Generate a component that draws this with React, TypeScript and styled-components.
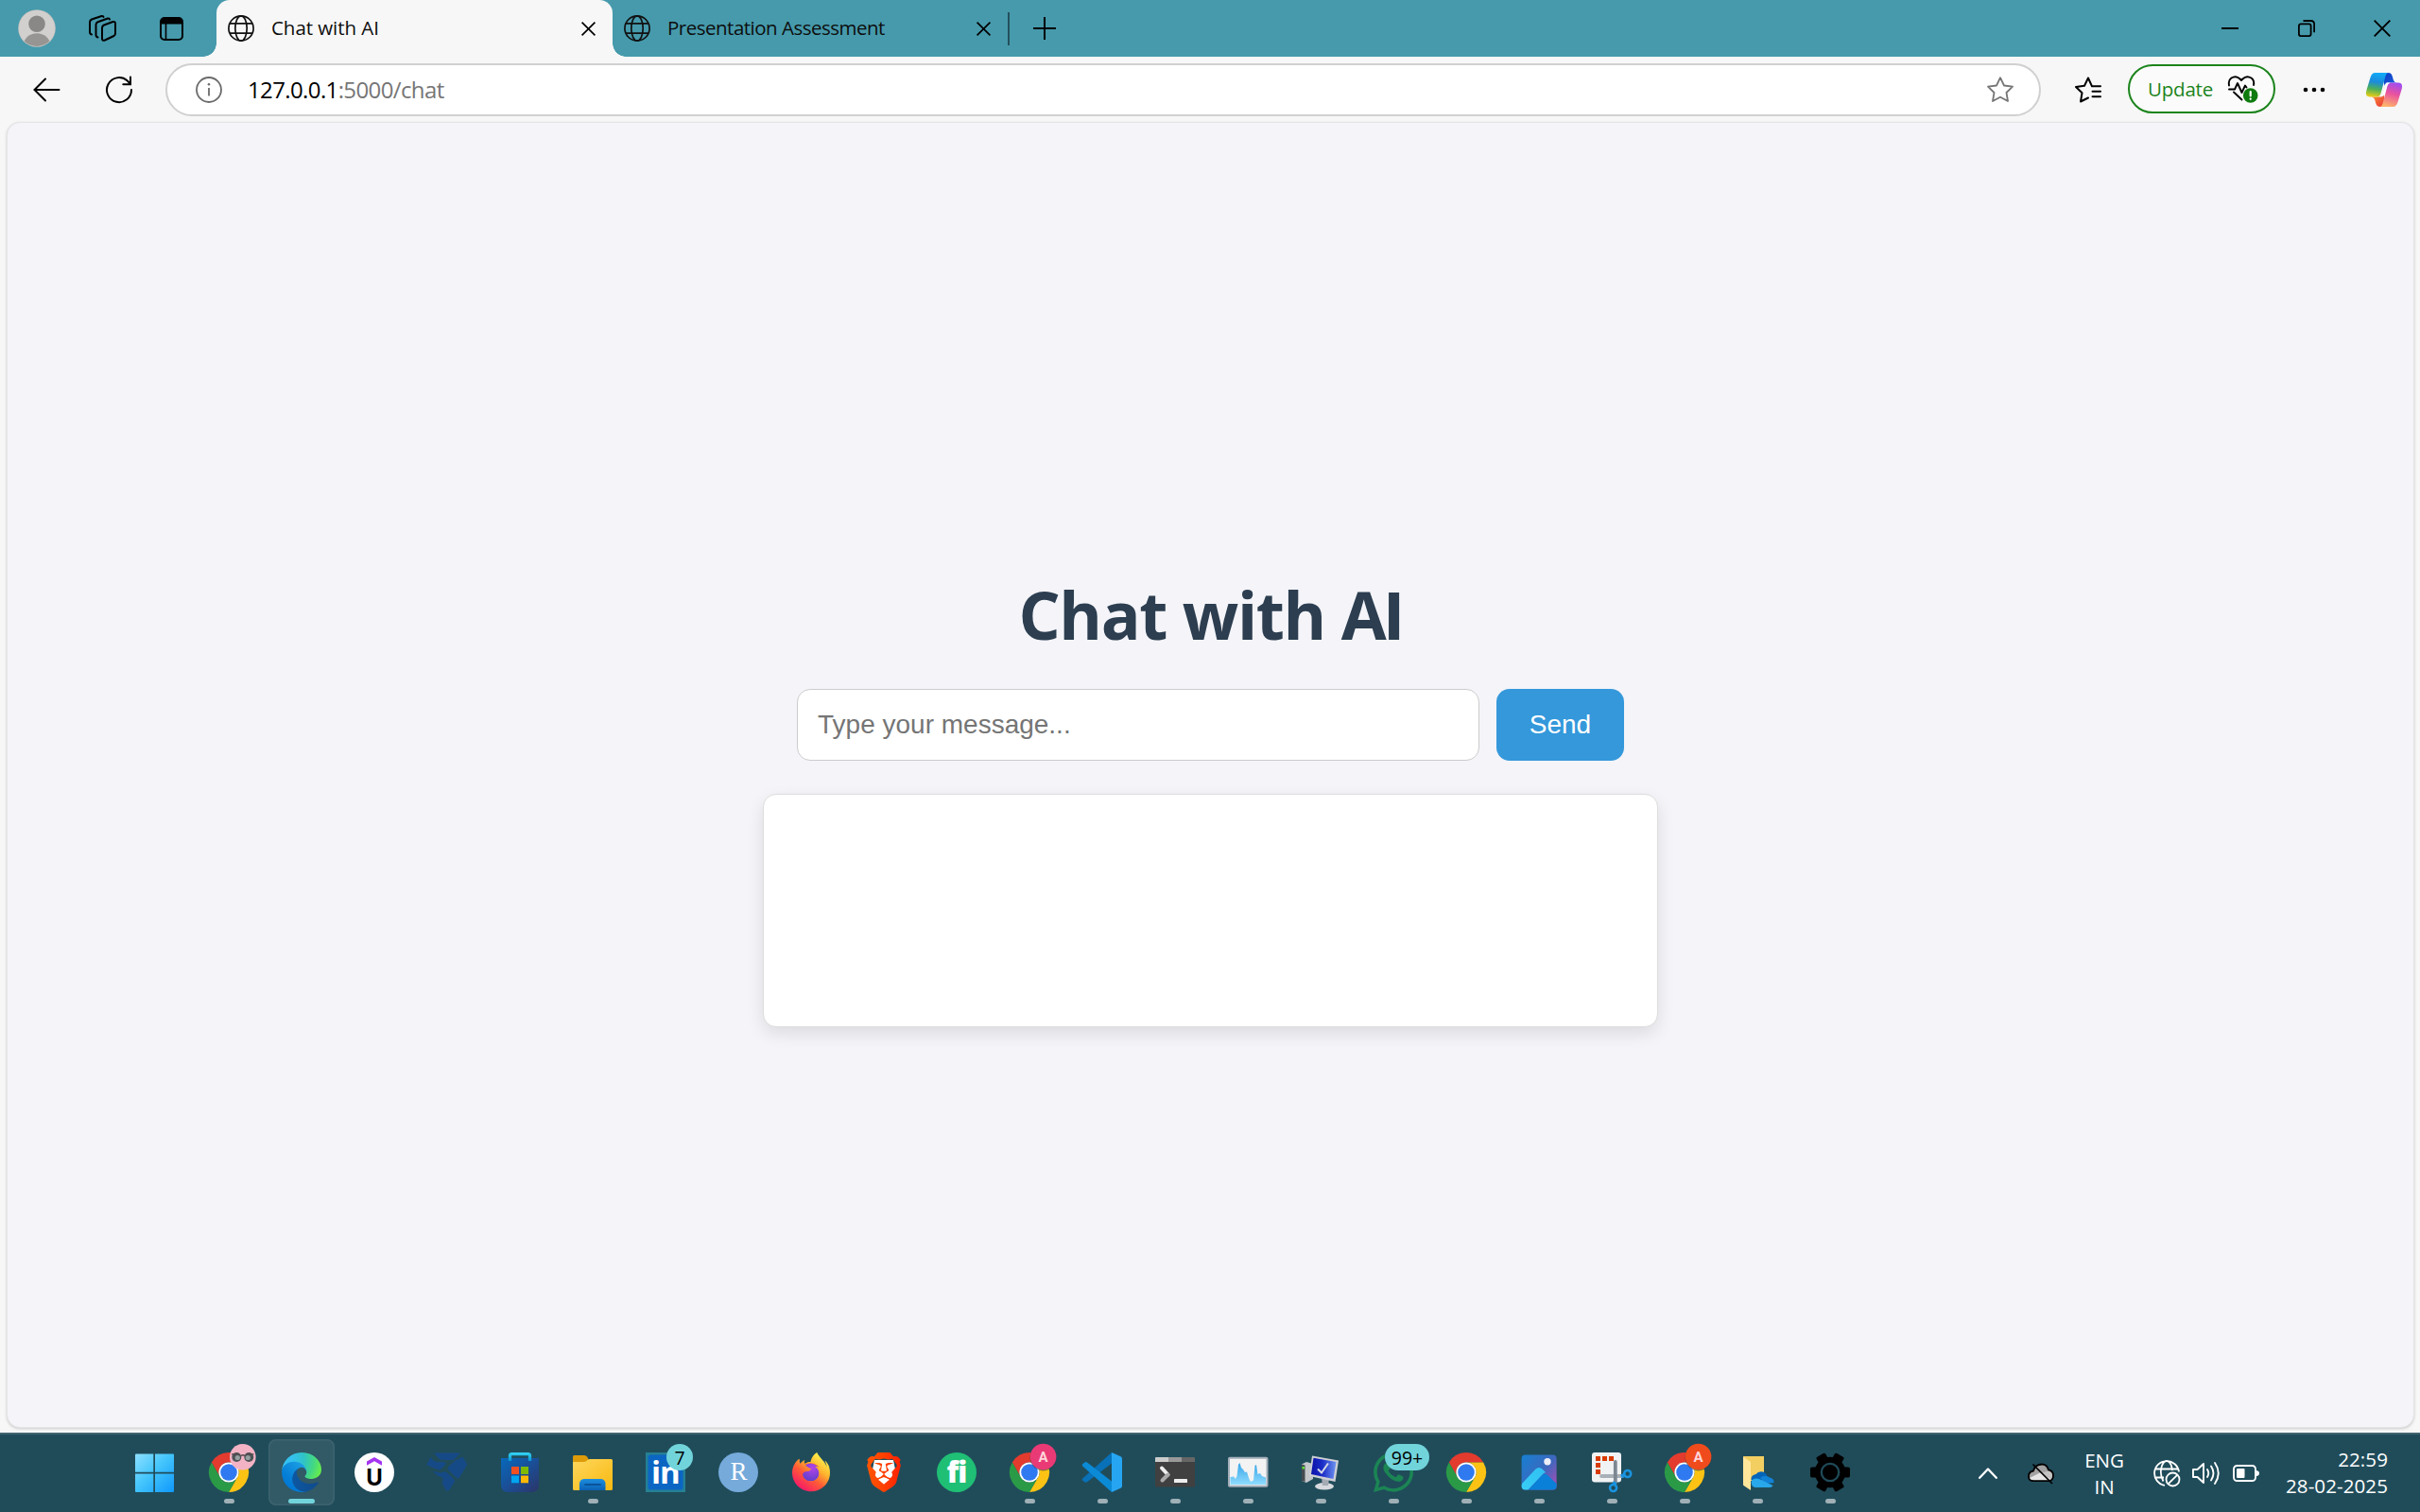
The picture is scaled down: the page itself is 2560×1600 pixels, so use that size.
import React from 'react';
import styled, { createGlobalStyle } from 'styled-components';
import { FaWhatsapp, FaFirefoxBrowser } from 'react-icons/fa';
import { SiBrave } from 'react-icons/si';

const GlobalStyle = createGlobalStyle`
  * { box-sizing: border-box; }
  html, body { margin: 0; padding: 0; }
  body { width: 2560px; height: 1600px; overflow: hidden; background: #f7f7f7; }
`;

const uiFont = `'Open Sans', 'Noto Sans', sans-serif`;

const Desktop = styled.div`
  width: 2560px;
  height: 1600px;
  display: flex;
  flex-direction: column;
  font-family: ${uiFont};
  background: #f7f7f7;
`;

const Icon = styled.svg<{ $w: number; $h?: number; $ml?: number }>`
  display: block;
  flex: none;
  width: ${p => p.$w}px;
  height: ${p => p.$h ?? p.$w}px;
  margin-left: ${p => p.$ml ?? 0}px;
  overflow: visible;
`;

/* ---------- title bar ---------- */

const TitleBar = styled.header`
  height: 60px;
  flex: none;
  display: flex;
  align-items: center;
  background: #469aac;
`;

const Tools = styled.div`
  width: 229px;
  flex: none;
  display: flex;
  align-items: center;
  padding-left: 19px;
`;

const Tab = styled.div<{ $active?: boolean }>`
  position: relative;
  width: ${p => (p.$active ? 419 : 418)}px;
  height: 60px;
  flex: none;
  display: flex;
  align-items: center;
  padding: 0 18px 0 12px;
  border-radius: 14px 14px 0 0;
  background: ${p => (p.$active ? '#f7f7f7' : 'transparent')};
  ${p =>
    p.$active &&
    `&::before, &::after {
      content: '';
      position: absolute;
      bottom: 0;
      width: 14px;
      height: 14px;
    }
    &::before { left: -14px; background: radial-gradient(circle at 0 0, transparent 13.5px, #f7f7f7 14px); }
    &::after { right: -14px; background: radial-gradient(circle at 100% 0, transparent 13.5px, #f7f7f7 14px); }`}
`;

const TabTitle = styled.span<{ $ls: number }>`
  flex: 1;
  margin-left: 18px;
  padding-bottom: 2px;
  font-size: 20.5px;
  line-height: 28px;
  letter-spacing: ${p => p.$ls}px;
  color: #0d0d0d;
  white-space: nowrap;
`;

const TabDivider = styled.div`
  width: 2px;
  height: 35px;
  background: #23505c;
  flex: none;
`;

const WindowControls = styled.div`
  margin-left: auto;
  display: flex;
  align-items: center;
  gap: 62.5px;
  padding-right: 31px;
`;

/* ---------- toolbar ---------- */

const Toolbar = styled.div`
  height: 69px;
  flex: none;
  display: flex;
  align-items: center;
  padding-left: 35px;
`;

const AddressBar = styled.div`
  width: 1984px;
  height: 56px;
  margin: 1px 0 0 35px;
  flex: none;
  display: flex;
  align-items: center;
  padding: 0 27px 0 30px;
  border: 2px solid #d0d0d0;
  border-radius: 28px;
  background: #fff;
`;

const Url = styled.div`
  flex: 1;
  margin-left: 27px;
  font-size: 24px;
  line-height: 32px;
  letter-spacing: -0.62px;
  color: #767676;
  white-space: nowrap;
  b { font-weight: 400; color: #000; }
`;

const UpdateButton = styled.button`
  width: 156px;
  height: 52px;
  margin: 0 0 1px 28px;
  padding: 0 16px 1px 19px;
  display: flex;
  align-items: center;
  justify-content: space-between;
  border: 2px solid #1b841b;
  border-radius: 26px;
  background: #fbfbfb;
  color: #1b841b;
  font-family: ${uiFont};
  font-size: 20.5px;
  letter-spacing: -0.2px;
`;

/* ---------- page ---------- */

const Viewport = styled.div`
  height: 1387px;
  flex: none;
  padding: 0 6px 5px 7px;
`;

const Page = styled.main`
  height: 1382px;
  display: flex;
  flex-direction: column;
  align-items: center;
  padding-top: 473px;
  border: 1px solid #e4e4e6;
  border-radius: 14px;
  box-shadow: 0 1px 3px rgba(0, 0, 0, 0.18);
  background: #f4f4f9;
`;

const Heading = styled.h1`
  height: 94px;
  margin: 0;
  font-size: 69.5px;
  line-height: 94px;
  font-weight: 700;
  letter-spacing: -1.35px;
  color: #2c3e50;
`;

/* sans capital I without slab serifs */
const PlainI = styled.span`
  margin-left: -1px;
  font-family: Roboto, sans-serif;
  font-weight: 800;
  line-height: 1;
`;

const Form = styled.form`
  display: flex;
  gap: 18px;
  margin-top: 32px;
`;

const MessageInput = styled.input`
  width: 722px;
  height: 76px;
  padding: 0 21px;
  border: 1px solid #ccc;
  border-radius: 14px;
  background: #fff;
  font: 28px 'Liberation Sans', Arial, sans-serif;
  &::placeholder { color: #757575; opacity: 1; }
`;

const SendButton = styled.button`
  width: 135px;
  height: 76px;
  padding: 0;
  border: 0;
  border-radius: 14px;
  background: #3498db;
  color: #fff;
  font: 28px 'Liberation Sans', Arial, sans-serif;
`;

const ChatBox = styled.section`
  width: 947px;
  height: 247px;
  margin-top: 35px;
  border: 1px solid #ddd;
  border-radius: 14px;
  background: #fff;
  box-shadow: 0 7px 18px rgba(0, 0, 0, 0.1);
`;

/* ---------- taskbar ---------- */

const Taskbar = styled.footer`
  height: 84px;
  flex: none;
  display: flex;
  align-items: flex-start;
  padding-left: 128px;
  border-top: 2px solid #426470;
  background: #204c5a;
`;

const Item = styled.div<{ $active?: boolean; $ml?: number }>`
  position: relative;
  width: 70px;
  height: 70px;
  flex: none;
  margin: 5px 7px 0 ${p => p.$ml ?? 0}px;
  padding-top: 14px;
  display: flex;
  flex-direction: column;
  align-items: center;
  gap: 7px;
  border-radius: 8px;
  ${p => p.$active && `background: #315966; box-shadow: inset 0 0 0 1.5px #3d636f;`}
`;

const Indicator = styled.i<{ $active?: boolean }>`
  width: ${p => (p.$active ? 28 : 11)}px;
  height: 5px;
  border-radius: 3px;
  background: ${p => (p.$active ? '#72d4db' : '#9fb0b6')};
`;

const Badge = styled.span<{ $w?: number; $left?: number }>`
  position: absolute;
  top: 5px;
  left: ${p => p.$left ?? 36}px;
  width: ${p => p.$w ?? 28}px;
  height: 28px;
  border-radius: 14px;
  background: #72d4db;
  color: #000;
  font-size: 19.5px;
  line-height: 29px;
  text-align: center;
`;

const Tray = styled.div`
  margin-left: auto;
  height: 82px;
  display: flex;
  align-items: center;
  padding: 0 34px 0 0;
  color: #fff;
`;

const TrayText = styled.div<{ $ml: number; $w: number; $align: string; $ls?: number; $up?: number }>`
  margin-left: ${p => p.$ml}px;
  margin-bottom: ${p => p.$up ?? 0}px;
  width: ${p => p.$w}px;
  font-size: 20.5px;
  line-height: 28px;
  letter-spacing: ${p => p.$ls ?? 0}px;
  text-align: ${p => p.$align};
  white-space: nowrap;
`;

/* ---------- drawings ---------- */

const Globe = ({ ml = 0 }: { ml?: number }) => (
  <Icon $w={28} $ml={ml} viewBox="0 0 28 28" fill="none" stroke="#111" strokeWidth="1.7">
    <circle cx="14" cy="14" r="13.1" />
    <ellipse cx="14" cy="14" rx="6.2" ry="13.1" />
    <path d="M2 8.8H26M2 19.2H26" />
  </Icon>
);

const Cross = ({ s = 15, ml = 0, w = 2 }: { s?: number; ml?: number; w?: number }) => (
  <Icon $w={s} $ml={ml} viewBox="0 0 18 18" fill="none" stroke="#000" strokeWidth={w}>
    <path d="M.7.7 17.3 17.3M17.3.7.7 17.3" />
  </Icon>
);

const Chrome = ({ children }: { children?: React.ReactNode }) => {
  const d = 'M2.8 10.5A21 21 0 0 1 39.2 10.5H21A10.5 10.5 0 0 0 11.9 26.25Z';
  return (
    <Icon $w={42} viewBox="0 0 42 42">
      <path d={d} fill="#e33b2e" />
      <path d={d} fill="#fcc314" transform="rotate(120 21 21)" />
      <path d={d} fill="#2b9a47" transform="rotate(240 21 21)" />
      <circle cx="21" cy="21" r="10.6" fill="#fff" />
      <circle cx="21" cy="21" r="8.8" fill="#2f7af0" />
      {children}
    </Icon>
  );
};

const ProfileA = ({ color }: { color: string }) => (
  <g>
    <circle cx="35.6" cy="5.4" r="14" fill="#173f4c" opacity=".55" />
    <circle cx="35.6" cy="4.6" r="13.8" fill={color} />
    <text x="35.6" y="10" fontSize="15" fontWeight="700" textAnchor="middle" fill="#ffd5da" fontFamily="Roboto, sans-serif">A</text>
  </g>
);

const Start = () => (
  <Icon $w={41} $h={42} viewBox="0 -1.5 41 42">
    <defs>
      <linearGradient id="win" gradientUnits="userSpaceOnUse" x1="0" y1="0" x2="41" y2="41">
        <stop offset="0" stopColor="#8de0ff" /><stop offset=".45" stopColor="#45c6fc" /><stop offset="1" stopColor="#0f98fb" />
      </linearGradient>
    </defs>
    <path fill="url(#win)" d="M1 0H19.3V19.3H0V1Q0 0 1 0ZM21 0H40Q41 0 41 1V19.3H21ZM0 21H19.3V40.5H1Q0 40.5 0 39.5ZM21 21H41V39.5Q41 40.5 40 40.5H21Z" />
  </Icon>
);

const Edge = () => (
  <Icon $w={42} viewBox="0 0 256 256">
    <defs>
      <linearGradient id="e1" gradientUnits="userSpaceOnUse" x1="63" y1="178" x2="241" y2="178"><stop offset="0" stopColor="#0c59a4" /><stop offset="1" stopColor="#114a8b" /></linearGradient>
      <linearGradient id="e2" gradientUnits="userSpaceOnUse" x1="157" y1="100" x2="46" y2="221"><stop offset="0" stopColor="#1b9de2" /><stop offset=".2" stopColor="#1595df" /><stop offset=".7" stopColor="#0680d7" /><stop offset="1" stopColor="#0078d4" /></linearGradient>
      <radialGradient id="e3" gradientUnits="userSpaceOnUse" cx="30" cy="50" r="235"><stop offset="0" stopColor="#35c1f1" /><stop offset=".2" stopColor="#34c1ed" /><stop offset=".5" stopColor="#2fc2c8" /><stop offset=".78" stopColor="#43d883" /><stop offset="1" stopColor="#66eb4e" /></radialGradient>
    </defs>
    <g transform="translate(-4.63 -4.92)">
      <path fill="url(#e1)" d="M235.68 195.46a93.73 93.73 0 0 1-10.54 4.71 101.87 101.87 0 0 1-35.9 6.46c-47.32 0-88.54-32.55-88.54-74.32A31.48 31.48 0 0 1 117.13 105c-42.8 1.8-53.8 46.4-53.8 72.53 0 73.88 68.09 81.37 82.76 81.37 7.91 0 19.84-2.3 27-4.56l1.31-.44a128.34 128.34 0 0 0 66.6-52.8 4 4 0 0 0-5.32-5.64Z" />
      <path fill="url(#e2)" d="M110.34 246.34A79.2 79.2 0 0 1 87.6 225a80.72 80.72 0 0 1 29.53-120c3.12-1.47 8.45-4.13 15.54-4a32.35 32.35 0 0 1 25.69 13 31.88 31.88 0 0 1 6.36 18.66c0-.21 24.46-79.6-80-79.6-43.9 0-80 41.66-80 78.21a130.15 130.15 0 0 0 12.11 56 128 128 0 0 0 156.38 67.11 75.55 75.55 0 0 1-62.78-8Z" />
      <path fill="url(#e3)" d="M156.94 153.78c-.81 1.05-3.3 2.5-3.3 5.66 0 2.61 1.7 5.12 4.72 7.23 14.38 10 41.49 8.68 41.56 8.68a59.56 59.56 0 0 0 30.27-8.35 61.38 61.38 0 0 0 30.43-52.88c.26-22.41-8-37.31-11.34-43.91C228.09 28.76 182.35 4.92 132.61 4.92a128 128 0 0 0-128 126.2c.48-36.54 36.8-66.05 80-66.05 3.5 0 23.46.34 42 10.07 16.34 8.58 24.9 18.94 30.85 29.21 6.18 10.67 7.28 24.15 7.28 29.52s-2.74 13.33-7.8 19.91Z" />
    </g>
  </Icon>
);

const Udemy = () => (
  <Icon $w={42} viewBox="0 0 42 42">
    <circle cx="21" cy="21" r="21" fill="#fff" />
    <path d="M21 5 29 9.6V13.8L21 9.2 13 13.8V9.6Z" fill="#a435f0" />
    <text x="21" y="35.3" textAnchor="middle" fontSize="24" fontWeight="700" fontFamily="Inter, sans-serif" fill="#000">U</text>
  </Icon>
);

const BlueGem = () => (
  <Icon $w={42} viewBox="0 0 42 42" fill="#164a87">
    <path d="M7 .5H35L29.5 6.5Q28 8 26 8H15.5Q14 8 12.5 6.5Z" />
    <path d="M4 4.5Q5.500 9 10 10H17Q21 10.500 18.500 13.500L15 17Q13 19 9.500 17.600L0 13.500Q-.5 12 .8 10Z" />
    <path d="M37.5 4.500 42 12.500Q42 13.800 41 15L34 26.500Q32.500 28 30.500 26.500L22.500 18.800Q20.800 17 22.500 15L30 8Q34 7 37.500 4.500Z" />
    <path d="M6.500 19.500Q13 23 17.500 20.500Q19.500 20 21 21.500L27.500 27.500Q29.500 29.500 28.500 31.500L23 40Q21 41.500 19.500 39.500L15.500 32Q19 27 14 25.500Q9 24.500 6.500 19.500Z" />
  </Icon>
);

const Store = () => (
  <Icon $w={42} viewBox="0 0 42 42">
    <defs>
      <linearGradient id="st" x1="0" y1="0" x2="1" y2="1"><stop offset="0" stopColor="#0869bb" /><stop offset=".5" stopColor="#1a4e96" /><stop offset="1" stopColor="#2c3567" /></linearGradient>
      <linearGradient id="sh" gradientUnits="userSpaceOnUse" x1="0" y1="0" x2="0" y2="9"><stop offset="0" stopColor="#35d6f5" /><stop offset="1" stopColor="#0a93cf" /></linearGradient>
    </defs>
    <path d="M1 6H41V34Q41 42 33 42H9Q1 42 1 34Z" fill="url(#st)" />
    <path d="M10.500 9V3.500Q10.500 1.600 12.500 1.600H29.500Q31.500 1.600 31.500 3.500V9" fill="none" stroke="url(#sh)" strokeWidth="3.300" />
    <path d="M12 15H20V23H12Z" fill="#f25022" /><path d="M22 15H30V23H22Z" fill="#7fba00" />
    <path d="M12 24.500H20V32.300H12Z" fill="#00a4ef" /><path d="M22 24.500H30V32.300H22Z" fill="#ffb900" />
  </Icon>
);

const Explorer = () => (
  <Icon $w={42} viewBox="0 0 42 42">
    <defs>
      <linearGradient id="fo" x1="0" y1="0" x2="1" y2="1"><stop offset="0" stopColor="#ffd75e" /><stop offset="1" stopColor="#f8b90f" /></linearGradient>
      <linearGradient id="fb" x1="0" y1="0" x2="0" y2="1"><stop offset="0" stopColor="#1c8ede" /><stop offset="1" stopColor="#0c62b5" /></linearGradient>
    </defs>
    <path d="M0 4.500Q0 3 1.500 3H12Q14 3 15 4.500L17 8V14H0Z" fill="#dd9b0a" />
    <path d="M0 10H12Q14 10 15 8.600Q16 7 18 7H40.500Q42 7 42 8.500V38.500Q42 40 40.500 40H1.500Q0 40 0 38.500Z" fill="url(#fo)" />
    <path d="M7 40V33.500Q7 28 12.500 28H29Q34.500 28 34.500 33.500V40Z" fill="url(#fb)" />
    <path d="M13 34H29" stroke="#0a549c" strokeWidth="1.800" strokeLinecap="round" />
  </Icon>
);

const LinkedIn = () => (
  <Icon $w={42} viewBox="0 0 42 42">
    <rect width="42" height="42" fill="#258094" />
    <rect x="2.500" y="2.500" width="37" height="37" rx="2.500" fill="#0b66c3" />
    <text x="20.800" y="33" textAnchor="middle" fontSize="33" fontWeight="700" letterSpacing="-1" fontFamily="'Open Sans', sans-serif" fill="#fff">in</text>
  </Icon>
);

const RStudio = () => (
  <Icon $w={42} viewBox="0 0 42 42">
    <circle cx="21" cy="21" r="21" fill="#75aadb" />
    <text x="21.500" y="29" textAnchor="middle" fontSize="27" fontFamily="'Liberation Serif', serif" fill="#fff">R</text>
  </Icon>
);

const Firefox = () => (
  <Icon $w={42} viewBox="0 0 42 42">
    <defs>
      <linearGradient id="ff" gradientUnits="userSpaceOnUse" x1="420" y1="60" x2="110" y2="480"><stop offset="0" stopColor="#fff04e" /><stop offset=".32" stopColor="#ffb52e" /><stop offset=".6" stopColor="#ff5b36" /><stop offset="1" stopColor="#f5156c" /></linearGradient>
      <radialGradient id="fp" cx=".6" cy=".25" r=".8"><stop offset="0" stopColor="#b443e6" /><stop offset="1" stopColor="#5a3fc8" /></radialGradient>
    </defs>
    <circle cx="21" cy="24" r="14" fill="#ff8a2a" />
    <circle cx="20.500" cy="21" r="9.500" fill="url(#fp)" />
    <FaFirefoxBrowser size={42} fill="url(#ff)" />
  </Icon>
);

const Brave = () => (
  <Icon $w={42} viewBox="0 0 42 42">
    <defs><linearGradient id="br" x1="0" y1="0" x2="1" y2="0"><stop offset="0" stopColor="#ff5601" /><stop offset=".5" stopColor="#ff4000" /><stop offset="1" stopColor="#ff1f01" /></linearGradient></defs>
    <path d="M11 8H31L33 18 27 32 21 36 15 32 9 18Z" fill="#fff" />
    <SiBrave size={42} fill="url(#br)" />
  </Icon>
);

const Fi = () => (
  <Icon $w={42} viewBox="0 0 42 42">
    <circle cx="21" cy="21" r="21" fill="#1fbf75" />
    <text x="21" y="32" textAnchor="middle" fontSize="31" fontWeight="800" fontFamily="'Open Sans', sans-serif" fill="#fff" letterSpacing="-1">fi</text>
  </Icon>
);

const VsCode = () => (
  <Icon $w={42} viewBox="0 0 42 42">
    <path d="M31 0 0 27.800Q-.6 29 .5 30L3 31.500Q4 32 5 31.200L31 11.500Z" fill="#0871b8" />
    <path d="M31 42 0 14.200Q-.6 13 .5 12L3 10.300Q4 9.800 5 10.600L31 30.500Z" fill="#0b8ad6" />
    <path d="M31 0 40.500 4.300Q42 5 42 6.500V35.500Q42 37 40.500 37.700L31 42Z" fill="#26a6f2" />
  </Icon>
);

const Terminal = () => (
  <Icon $w={42} viewBox="0 0 42 42">
    <rect y="5" width="42" height="31.500" rx="1" fill="#404040" />
    <path d="M0 6Q0 5 1 5H14V10H0Z" fill="#ccc" /><path d="M14 5H28V10H14Z" fill="#999" /><path d="M28 5H41Q42 5 42 6V10H28Z" fill="#666" />
    <path d="M7 16.500 13.500 23.500" fill="none" stroke="#eee" strokeWidth="4" strokeLinecap="round" />
    <path d="M13.500 23.500 7.500 29.500" fill="none" stroke="#aaa" strokeWidth="4" strokeLinecap="round" />
    <rect x="20" y="28" width="14" height="4" rx=".6" fill="#eee" />
  </Icon>
);

const Monitor = () => (
  <Icon $w={42} viewBox="0 0 42 42">
    <defs><linearGradient id="mo" x1="0" y1="0" x2="0" y2="1"><stop offset="0" stopColor="#36a3e6" /><stop offset="1" stopColor="#8fdcff" /></linearGradient></defs>
    <rect x="1" y="5.800" width="40.500" height="30" rx="1" fill="#f3f3f3" stroke="#a4afba" strokeWidth="2" />
    <path d="M2.500 26 6 25.500 8 28 9.500 25 11 13 12.500 11 14 16 16 18 18 21 20 20.500 22 27 24 31 27 29.500 28.500 14 30 13 31.500 23 34 22 36 25 40 26.500V34H2.500Z" fill="url(#mo)" />
  </Icon>
);

const Remote = () => (
  <Icon $w={42} viewBox="0 0 42 42">
    <defs><linearGradient id="re" x1="0" y1="0" x2="1" y2="0"><stop offset="0" stopColor="#0b12a8" /><stop offset=".45" stopColor="#1b2cc8" /><stop offset="1" stopColor="#6f95f0" /></linearGradient></defs>
    <path d="M1 12.500 6 10 13 12V28L6 32 1 30Z" fill="#c5c8cb" /><path d="M1 12.500 4.500 13.500V31L1 30Z" fill="#444c50" />
    <path d="M1.500 15H4V17.500H1.500Z" fill="#5ce02d" />
    <ellipse cx="25" cy="35.800" rx="10" ry="3.700" fill="#d6d9dd" /><path d="M22 27H30L29 35H23Z" fill="#a5abb3" />
    <path d="M12 3.500 40 8.500 36.500 31 9 25Z" fill="#cdd0d4" />
    <path d="M13.500 5.800 37.500 10 34.500 28 11 23Z" fill="url(#re)" />
    <path d="M18 17.500 22 21.500 29 11.500" fill="none" stroke="#d5d9e6" strokeWidth="2" />
  </Icon>
);

const WhatsApp = () => (
  <Icon $w={42} viewBox="0 0 42 42">
    <svg x="-3" y="-3" width="48" height="48"><FaWhatsapp size={48} fill="#1b8554" /></svg>
  </Icon>
);

const Photos = () => (
  <Icon $w={42} viewBox="0 0 42 42">
    <defs>
      <linearGradient id="p1" x1="0" y1="0" x2="1" y2=".8"><stop offset="0" stopColor="#1680d2" /><stop offset=".6" stopColor="#3c68be" /><stop offset="1" stopColor="#9c50b5" /></linearGradient>
      <linearGradient id="p2" x1="0" y1="1" x2="1" y2="0"><stop offset="0" stopColor="#38cdf6" /><stop offset="1" stopColor="#2fc0f2" /></linearGradient>
    </defs>
    <rect x="2.600" y="2.500" width="37" height="37" rx="4" fill="url(#p1)" />
    <path d="M10 39.500 24 24Q27 21.500 30 24L39.600 33V35.500Q39.600 39.500 35.500 39.500Z" fill="#0a80d8" />
    <path d="M3 33 17.500 17.500Q21 14.500 24.500 17.500L28 21Q25.500 22 24 24L9.500 39.500H6.500Q2.600 39.500 2.600 35.500Z" fill="url(#p2)" />
    <circle cx="30" cy="9.800" r="3.700" fill="#eceef7" />
  </Icon>
);

const Snip = () => (
  <Icon $w={42} viewBox="0 0 42 42">
    <rect width="31" height="31.500" rx="3" fill="#f0f2f4" />
    <path d="M4 4H9V9H4ZM11 4H16V9H11ZM18 4H23V9H18ZM4 11H9V16H4ZM4 18H9V23H4Z" fill="#d83b01" />
    <path d="M10 25H32" stroke="#a9b0b7" strokeWidth="3.800" strokeLinecap="round" />
    <path d="M24.800 10V32" stroke="#7c8792" strokeWidth="3.800" strokeLinecap="round" />
    <path d="M31 25.500 35 23.500M24.500 31 23.500 34" stroke="#1a94e0" strokeWidth="4" />
    <circle cx="37.700" cy="22.500" r="3.500" fill="none" stroke="#1a94e0" strokeWidth="2.600" />
    <circle cx="22.600" cy="37.500" r="3.500" fill="none" stroke="#1a94e0" strokeWidth="2.600" />
  </Icon>
);

const OneDriveFolder = () => (
  <Icon $w={42} viewBox="0 0 42 42">
    <path d="M6 4H28V30H12Z" fill="#f3cf62" />
    <path d="M6 4.500 14 10V40L6.500 35Q6 34.500 6 34Z" fill="#ffe69b" />
    <path d="M14.500 29Q14 24 19.500 23Q22 19.500 27 20.500Q30 21.500 31.500 24.500L24 32Z" fill="#0364b8" />
    <path d="M24 27Q29 23 34 26.500Q39 27.500 38.500 32L30 33Z" fill="#1182d6" />
    <path d="M14.500 31Q15.500 27.500 20 27.500Q23 27.500 26 29.500L37.500 35Q36.500 37 34 37H19Q14.500 36.500 14.500 31Z" fill="#28a8ea" />
  </Icon>
);

const Settings = () => (
  <Icon $w={42} viewBox="0 0 42 42">
    <g fill="#000">
      {[0, 60, 120].map(a => (
        <rect key={a} x="0" y="15.500" width="42" height="11" rx="1.800" transform={`rotate(${a} 21 21)`} />
      ))}
      <circle cx="21" cy="21" r="16.300" />
    </g>
    <circle cx="21" cy="21" r="9.200" fill="none" stroke="#1f4b59" strokeWidth="2.300" />
  </Icon>
);

const Copilot = () => (
  <Icon $w={38} $h={36} $ml={44} viewBox="0 0 38 36">
    <defs>
      <linearGradient id="c1" x1=".3" y1="0" x2=".15" y2="1"><stop offset="0" stopColor="#12a9f5" /><stop offset=".35" stopColor="#1b8bdc" /><stop offset=".65" stopColor="#4cb05a" /><stop offset="1" stopColor="#f5cf12" /></linearGradient>
      <linearGradient id="c2" x1=".7" y1="0" x2=".4" y2="1"><stop offset="0" stopColor="#a04df0" /><stop offset=".45" stopColor="#e9529f" /><stop offset="1" stopColor="#fdb26a" /></linearGradient>
      <linearGradient id="c3" x1="0" y1="0" x2="1" y2="1"><stop offset="0" stopColor="#0d3fc4" /><stop offset="1" stopColor="#1d5fe0" /></linearGradient>
      <linearGradient id="c4" x1="0" y1="0" x2="1" y2="1"><stop offset="0" stopColor="#ff9a2e" /><stop offset="1" stopColor="#e8363a" /></linearGradient>
    </defs>
    <path d="M19 0H23.500Q26.500 0 27.500 3L29 8Q30 10.500 33 10.500H23Q20 10.500 19 14Z" fill="url(#c3)" />
    <path d="M19 36H15Q11.500 36 10.500 33L9 28Q8 25.500 5 25.500H15.500Q18.500 25.500 19 22Z" fill="url(#c4)" />
    <path d="M17.500 24 21.500 10.500H25L21 24.500Z" fill="#fff" />
    <path d="M9.500 0H24Q21.500 0 20.500 3.500L15.500 22Q14.500 25.500 11 25.500H4Q-1.500 25.500 .4 18.500L4.500 5Q6 0 9.500 0Z" fill="url(#c1)" />
    <path d="M28.500 36H14Q16.500 36 17.500 32.500L22.500 14Q23.500 10.500 27 10.500H34Q39.500 10.500 37.600 17.500L33.500 31Q32 36 28.500 36Z" fill="url(#c2)" />
  </Icon>
);

type Entry = { icon: React.ReactNode; running?: boolean; active?: boolean; badge?: string; ml?: number };

const entries: Entry[] = [
  { icon: <Start /> },
  {
    icon: (
      <Chrome>
        <circle cx="35.800" cy="4.800" r="13.800" fill="#f3b3c5" />
        <circle cx="29.300" cy="5" r="5" fill="#4e5457" /><circle cx="42.300" cy="5" r="5" fill="#4e5457" />
        <circle cx="30.300" cy="5.500" r="2.600" fill="#96a0a0" /><circle cx="41.300" cy="5.500" r="2.600" fill="#96a0a0" />
        <path d="M24 1.800H32M39.500 1.800H47.500M34 3.500Q36 2 38 3.500" stroke="#54484c" strokeWidth="1.300" fill="none" />
      </Chrome>
    ),
    running: true,
    ml: 2,
  },
  { icon: <Edge />, running: true, active: true },
  { icon: <Udemy /> },
  { icon: <BlueGem /> },
  { icon: <Store /> },
  { icon: <Explorer />, running: true },
  { icon: <LinkedIn />, badge: '7' },
  { icon: <RStudio /> },
  { icon: <Firefox /> },
  { icon: <Brave /> },
  { icon: <Fi /> },
  { icon: <Chrome><ProfileA color="#e93a76" /></Chrome>, running: true },
  { icon: <VsCode />, running: true },
  { icon: <Terminal />, running: true },
  { icon: <Monitor />, running: true },
  { icon: <Remote />, running: true },
  { icon: <WhatsApp />, running: true, badge: '99+' },
  { icon: <Chrome />, running: true },
  { icon: <Photos />, running: true },
  { icon: <Snip />, running: true },
  { icon: <Chrome><ProfileA color="#f04b1c" /></Chrome>, running: true },
  { icon: <OneDriveFolder />, running: true },
  { icon: <Settings />, running: true },
];

export default function App() {
  return (
    <Desktop>
      <GlobalStyle />
      <TitleBar>
        <Tools>
          <Icon $w={40} viewBox="0 0 40 40">
            <clipPath id="av"><circle cx="20" cy="20" r="19" /></clipPath>
            <circle cx="20" cy="20" r="19.800" fill="#c4c2c0" />
            <g clipPath="url(#av)"><rect width="40" height="40" fill="#d2d0ce" /><circle cx="20" cy="15.300" r="8.800" fill="#8a8886" /><ellipse cx="20" cy="37.500" rx="14" ry="12.300" fill="#979593" /></g>
          </Icon>
          <Icon $w={29} $h={28} $ml={35} viewBox="0 0 29 28" fill="none" stroke="#000" strokeWidth="2" strokeLinejoin="round" strokeLinecap="round">
            <path d="M16 10.500 25.500 7Q28 6.500 28 9V19.500Q28 21 26.500 22L17 26.500Q14 27.500 14 25V13.500Q14 11.500 16 10.500Z" />
            <path d="M9.500 23.500Q7.500 23 7.500 21V10Q7.500 8 9.500 7.200L20 3.500Q21.800 3.200 22 4.500" />
            <path d="M3 20.500Q1 20 1 18V7.500Q1 5.500 3 4.500L13.500 1Q15.200 .600 15.500 2" />
          </Icon>
          <Icon $w={25} $ml={46} viewBox="0 0 25 25">
            <rect x="1" y="1" width="23" height="23" rx="4" fill="none" stroke="#000" strokeWidth="2" />
            <path d="M1 7.500V5Q1 1 5 1H20Q24 1 24 5V7.500Z" /><path d="M6.500 7V24" stroke="#000" strokeWidth="1.600" />
          </Icon>
        </Tools>
        <Tab $active><Globe /><TabTitle $ls={-0.05}>Chat with AI</TabTitle><Cross /></Tab>
        <Tab><Globe /><TabTitle $ls={-0.5}>Presentation Assessment</TabTitle><Cross /></Tab>
        <TabDivider />
        <Icon $w={24} $ml={25} viewBox="0 0 24 24" stroke="#000" strokeWidth="2"><path d="M12 0V24M0 12H24" /></Icon>
        <WindowControls>
          <Icon $w={18} viewBox="0 0 18 18"><path d="M0 9H18" stroke="#000" strokeWidth="2" /></Icon>
          <Icon $w={18} viewBox="0 0 18 18" fill="none" stroke="#000" strokeWidth="1.800">
            <rect x=".9" y="4.400" width="12.700" height="12.700" rx="2" /><path d="M5.500 1H13.500Q17.100 1 17.100 4.600V12Q17.100 12.500 16.500 13" />
          </Icon>
          <Cross s={18} w={1.9} />
        </WindowControls>
      </TitleBar>

      <Toolbar>
        <Icon $w={28} viewBox="0 0 28 28" fill="none" stroke="#000" strokeWidth="2" strokeLinecap="round"><path d="M13 2.500 1.500 14 13 25.500M1.500 14H27.500" /></Icon>
        <Icon $w={28} $ml={49} viewBox="0 0 28 28" fill="none" stroke="#000" strokeWidth="2" strokeLinecap="round"><path d="M27 14A13 13 0 1 1 22.500 4.300L26 7.800M26 .500V8.200H18.300" /></Icon>
        <AddressBar>
          <Icon $w={28} viewBox="0 0 28 28" fill="none" stroke="#6b6b6b" strokeWidth="1.800"><circle cx="14" cy="14" r="13" /><path d="M14 12V20.500" /><circle cx="14" cy="8.200" r="1.300" fill="#6b6b6b" stroke="none" /></Icon>
          <Url><b>127.0.0.1</b>:5000/chat</Url>
          <Icon $w={28} viewBox="0 0 28 28" fill="none" stroke="#767676" strokeWidth="1.800" strokeLinejoin="round"><path d="M14 1.200 18 9.500 27 10.700 20.500 17 22 26 14 21.700 6 26 7.500 17 1 10.700 10 9.500Z" /></Icon>
        </AddressBar>
        <Icon $w={28} $ml={36} viewBox="0 0 28 28" fill="none" stroke="#000" strokeWidth="2" strokeLinejoin="round" strokeLinecap="round">
          <path d="M27 10.300H18L14 1.500 10 9.800 1 11 7.500 17.300 6 26.500 14 22.500M18.500 15.700H27M18.500 21.200H27" />
        </Icon>
        <UpdateButton>
          Update
          <Icon $w={32} $h={28} viewBox="0 0 32 28" fill="none" stroke="#000" strokeWidth="1.900" strokeLinecap="round" strokeLinejoin="round">
            <path d="M1 10.500Q0 5 3.500 2.500Q8.500-.6 12.500 3.500L14 5 15.500 3.500Q19.500-.6 24.500 2.500Q28 5 27 10M1 14.500H7L10 8 14.500 18 18 10.500 19.500 12.500M6 17.500 14.500 25.500" />
            <circle cx="23.700" cy="21" r="7.800" fill="#0f7b0f" stroke="none" />
            <path d="M23.700 17V21.500M23.700 24.700V24.800" stroke="#fff" strokeWidth="2.200" />
          </Icon>
        </UpdateButton>
        <Icon $w={22} $h={6} $ml={30} viewBox="0 0 22 6"><circle cx="2" cy="3" r="2.300" /><circle cx="11" cy="3" r="2.300" /><circle cx="20" cy="3" r="2.300" /></Icon>
        <Copilot />
      </Toolbar>

      <Viewport>
        <Page>
          <Heading>Chat with A<PlainI>I</PlainI></Heading>
          <Form>
            <MessageInput placeholder="Type your message..." />
            <SendButton type="button">Send</SendButton>
          </Form>
          <ChatBox />
        </Page>
      </Viewport>

      <Taskbar>
        {entries.map((e, i) => (
          <Item key={i} $active={e.active} $ml={e.ml}>
            {e.icon}
            {e.running && <Indicator $active={e.active} />}
            {e.badge && <Badge $w={e.badge.length > 1 ? 47 : 28} $left={e.badge.length > 1 ? 26 : 36}>{e.badge}</Badge>}
          </Item>
        ))}
        <Tray>
          <Icon $w={20} $h={12} viewBox="0 0 20 12" fill="none" stroke="#fff" strokeWidth="2.300" strokeLinecap="round" strokeLinejoin="round"><path d="M1.200 10.800 10 1.500 18.800 10.800" /></Icon>
          <Icon $w={28} $h={22} $ml={32} viewBox="0 0 28 22">
            <path d="M6 19Q1 19 1 14Q1 9.500 6 8.500Q8 1.500 15 1.500Q20.500 1.500 22 7.500Q27 8.500 27 13.500Q27 19 22 19Z" fill="#a3a3a3" stroke="#000" strokeWidth="1.800" />
            <path d="M2 16 13 10.500 25 17Q23 18.200 21 18.200H6Q3 18.200 2 16Z" fill="#e6e6e6" /><path d="M22 8.500Q26 9.500 26 13.500L25 16.500 14 11Z" fill="#c4c4c4" />
            <path d="M5.500 1.500 26 22" stroke="#000" strokeWidth="1.700" />
          </Icon>
          <TrayText $ml={32} $w={42} $align="center" $up={1}>ENG<br />IN</TrayText>
          <Icon $w={28} $ml={31} viewBox="0 0 28 28" fill="none" stroke="#fff" strokeWidth="1.800">
            <path d="M12 26.900A13 13 0 1 1 27 12.500M10.500 22.500Q6 14 9 6 11 1 14 1T19 6L20 11M2 9.500H26M2 18.500H11" />
            <circle cx="20.500" cy="20.500" r="7" /><path d="M15.800 25.200 25.200 15.800" />
          </Icon>
          <Icon $w={29} $h={24} $ml={13} viewBox="0 0 29 24" fill="none" stroke="#fff" strokeWidth="1.900" strokeLinejoin="round" strokeLinecap="round">
            <path d="M1 8H5.500L12 2V22L5.500 16H1ZM16 8Q18.500 12 16 16M20 4.500Q25 12 20 19.500M24 1Q31.500 12 24 23" />
          </Icon>
          <Icon $w={28} $h={18} $ml={14} viewBox="0 0 28 18">
            <rect x="1" y="1" width="23" height="16" rx="3.500" fill="none" stroke="#fff" strokeWidth="1.900" /><rect x="4" y="4" width="8.500" height="10" rx="1" fill="#fff" /><path d="M25 6Q28 6.500 28 9T25 12Z" fill="#fff" />
          </Icon>
          <TrayText $ml={26} $w={110} $align="right" $ls={0.1} $up={3}>22:59<br />28-02-2025</TrayText>
        </Tray>
      </Taskbar>
    </Desktop>
  );
}
